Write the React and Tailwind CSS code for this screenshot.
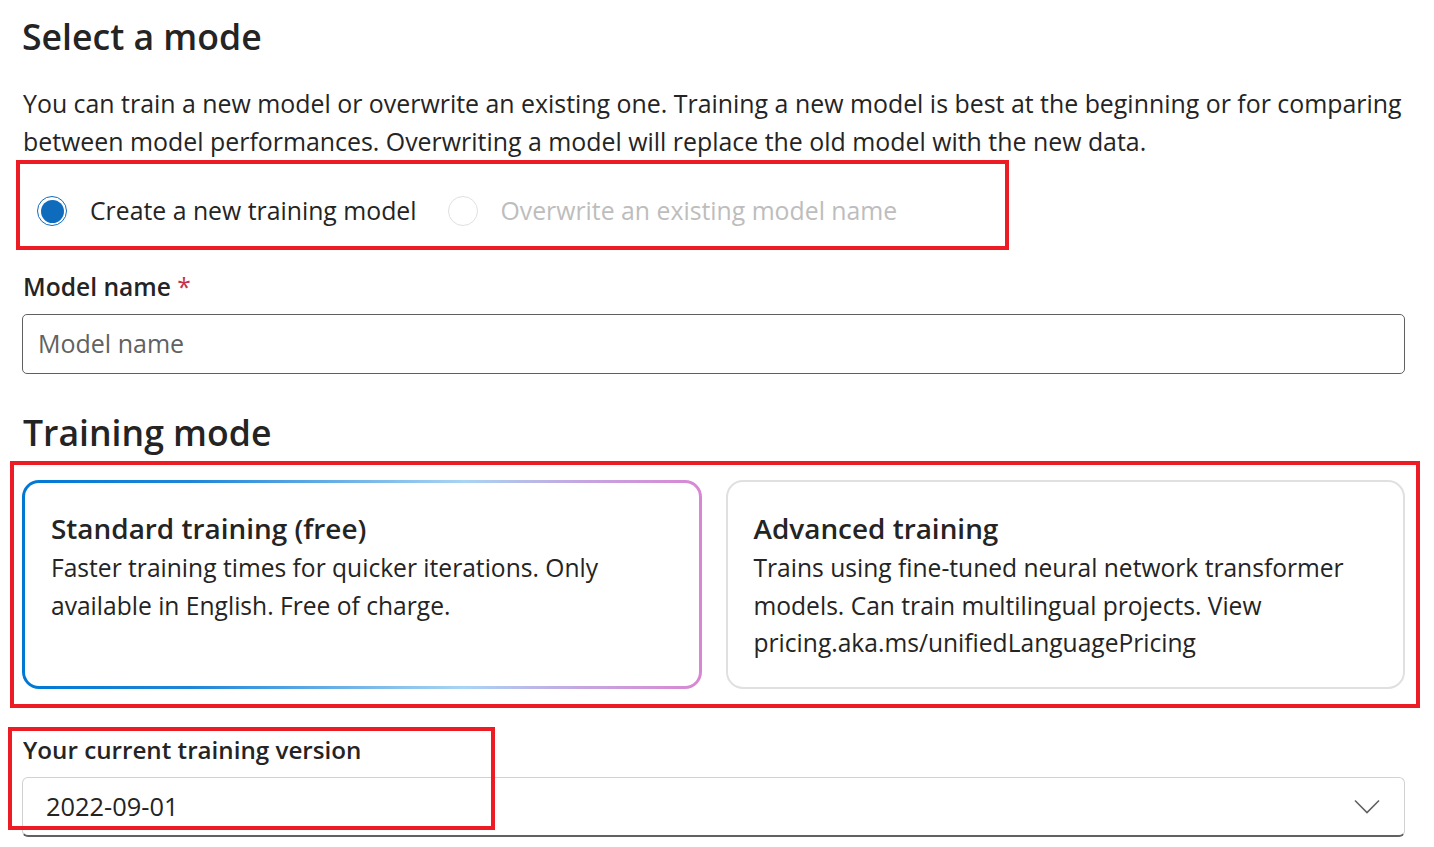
export default function App() {
  const font = { fontFamily: '"Open Sans", "Noto Sans", sans-serif' };
  return (
    <div className="relative w-[1434px] h-[847px] bg-white overflow-hidden text-[#242424]" style={font}>
      <div className="pl-[22px] pr-[29px]">
        <h1 className="mt-[10px] h-[52px] leading-[52px] text-[35.6px] font-semibold">Select a mode</h1>
        <p className="mt-[22px] text-[24.9px] leading-[38px] pl-px">
          <span className="block whitespace-nowrap">You can train a new model or overwrite an existing one. Training a new model is best at the beginning or for comparing</span>
          <span className="block whitespace-nowrap">between model performances. Overwriting a model will replace the old model with the new data.</span>
        </p>
        <div className="mt-[26px] h-[50px] flex items-center pl-[15px]">
          <div className="w-[30px] h-[30px] rounded-full border-[1.5px] border-[#0f6cbd] flex items-center justify-center">
            <div className="w-[23px] h-[23px] rounded-full bg-[#0f6cbd]" />
          </div>
          <span className="ml-[23px] text-[24.8px]">Create a new training model</span>
          <div className="ml-[31px] w-[30px] h-[30px] rounded-full border-[1.5px] border-[#e0e0e0]" />
          <span className="ml-[23px] text-[24.8px] text-[#bdbdbd]">Overwrite an existing model name</span>
        </div>
        <div className="mt-[32px] h-[38px] leading-[38px] text-[24.6px] font-semibold pl-px">
          Model name <span className="text-[#c4314b] font-normal">*</span>
        </div>
        <div className="mt-[8px] h-[60px] rounded-[5px] border border-[#616161] flex items-center pl-[15px]">
          <span className="text-[25px] text-[#616161]">Model name</span>
        </div>
        <h2 className="mt-[32px] h-[52px] leading-[52px] text-[35.6px] font-semibold pl-px">Training mode</h2>
        <div className="mt-[22px] grid grid-cols-2 gap-[24px] h-[209px]">
          <div className="rounded-[17px] p-[3px] bg-[linear-gradient(90deg,#0078d4_0%,#1e86d8_25%,#a9d4f3_65%,#c4a6e0_82%,#d986d3_100%)]">
            <div className="h-full rounded-[14px] bg-white px-[26px] pt-[26px]">
              <div className="text-[27.9px] leading-[38px] font-semibold">Standard training (free)</div>
              <div className="mt-[2px] text-[24.6px] leading-[37.5px]">Faster training times for quicker iterations. Only<br />available in English. Free of charge.</div>
            </div>
          </div>
          <div className="rounded-[17px] border-2 border-[#e0e0e0] px-[26px] pt-[27px]">
            <div className="text-[27.9px] leading-[38px] font-semibold">Advanced training</div>
            <div className="mt-[2px] text-[24.6px] leading-[37.5px]">Trains using fine-tuned neural network transformer<br />models. Can train multilingual projects. View<br />pricing.aka.ms/unifiedLanguagePricing</div>
          </div>
        </div>
        <div className="mt-[42px] h-[38px] leading-[38px] text-[24.2px] font-semibold pl-px">Your current training version</div>
        <div className="mt-[8px] h-[60px] rounded-[6px] border border-[#d1d1d1] border-b-2 border-b-[#616161] flex items-center justify-between pl-[23px] pr-[24px]">
          <span className="text-[25.4px]">2022-09-01</span>
          <svg width="26" height="15" viewBox="0 0 26 15" fill="none">
            <path d="M1 1.5 L13 13.5 L25 1.5" stroke="#616161" strokeWidth="1.6" />
          </svg>
        </div>
      </div>
      <div className="absolute left-[16px] top-[160px] w-[993px] h-[90px] border-[4px] border-[#ed1c24]" />
      <div className="absolute left-[10px] top-[461px] w-[1410px] h-[247px] border-[4px] border-[#ed1c24]" />
      <div className="absolute left-[8px] top-[727px] w-[487px] h-[103px] border-[4px] border-[#ed1c24]" />
    </div>
  );
}
